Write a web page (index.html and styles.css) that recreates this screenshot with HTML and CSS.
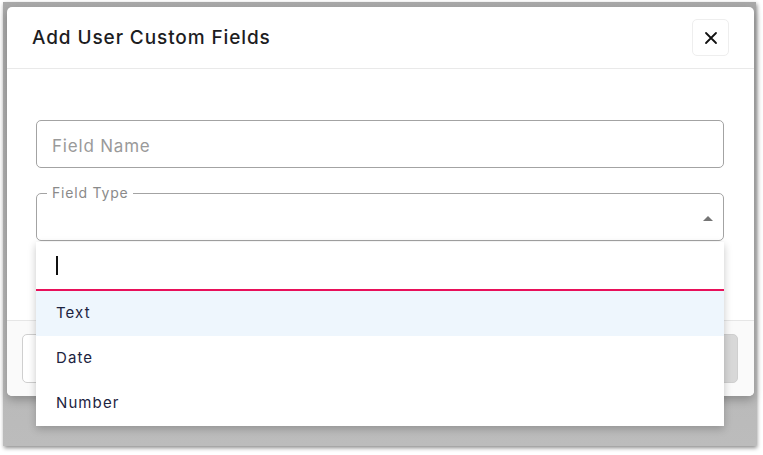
FILE: index.html
```html
<!DOCTYPE html>
<html>
<head>
<meta charset="utf-8">
<link rel="stylesheet" href="styles.css">
</head>
<body>
<div class="frame">
  <div class="modal">
    <div class="modal-header">
      <h2 class="title">Add User Custom Fields</h2>
      <button class="close" aria-label="Close">
        <svg width="14" height="14" viewBox="0 0 14 14"><path d="M2 2L12 12M12 2L2 12" stroke="#111" stroke-width="1.8" stroke-linecap="round"/></svg>
      </button>
    </div>
    <div class="modal-body">
      <div class="input">Field Name</div>
      <div class="select">
        <span class="legend">Field Type</span>
        <span class="arrow"></span>
      </div>
    </div>
    <div class="modal-footer">
      <button class="btn btn-cancel" aria-label="Cancel"></button>
      <button class="btn btn-save" aria-label="Save"></button>
    </div>
    <div class="dropdown">
      <div class="search"><span class="caret"></span></div>
      <div class="option active">Text</div>
      <div class="option">Date</div>
      <div class="option">Number</div>
    </div>
  </div>
</div>
</body>
</html>
```

FILE: styles.css
```css
* { box-sizing: border-box; }
html, body { margin: 0; padding: 0; background: #fff; }
body { font-family: Inter, "Noto Sans", sans-serif; width: 763px; height: 455px; overflow: hidden; }

.frame {
  margin: 2px 0 0 3px;
  width: 753px;
  height: 444px;
  padding: 5px 3px 0 4px;
  background: linear-gradient(#a9a9a9, #bcbcbc);
  box-shadow: 1px 2px 4px rgba(0,0,0,0.45);
}

.modal {
  position: relative;
  background: #fff;
  border-radius: 5px;
  width: 747px;
  box-shadow: 0 4px 10px rgba(0,0,0,0.25);
}

.modal-header {
  display: flex;
  align-items: center;
  justify-content: space-between;
  height: 62px;
  padding: 0 25px 0 25px;
  border-bottom: 1px solid #e9e9e9;
}
.title {
  margin: 0;
  font-size: 19px;
  font-weight: 500;
  color: #1d1d1f;
  letter-spacing: 0.9px;
}
.close {
  width: 37px; height: 37px;
  display: flex; align-items: center; justify-content: center;
  background: #fff;
  border: 1px solid #eeeeee;
  border-radius: 5px;
  padding: 0;
}

.modal-body {
  padding: 51px 30px 79px 29px;
  display: flex;
  flex-direction: column;
  gap: 25px;
}
.input {
  height: 48px;
  border: 1px solid #a3a3a3;
  border-radius: 5px;
  padding: 3px 15px 0 15px;
  display: flex; align-items: center;
  font-size: 17px;
  letter-spacing: 0.8px;
  color: #9a9a9a;
}
.select {
  position: relative;
  height: 48px;
  border: 1px solid #a3a3a3;
  border-radius: 5px;
}
.legend {
  position: absolute;
  left: 10px; top: -10px;
  background: #fff;
  padding: 0 5px;
  font-size: 14px;
  line-height: 17px;
  letter-spacing: 0.8px;
  color: #8a8a8a;
}
.arrow {
  position: absolute;
  right: 10px; top: 22px;
  width: 0; height: 0;
  border-left: 5px solid transparent;
  border-right: 5px solid transparent;
  border-bottom: 5px solid #757575;
}

.modal-footer {
  display: flex;
  justify-content: space-between;
  align-items: center;
  height: 76px;
  padding: 0 16px 0 15px;
  background: #fafafa;
  border-top: 1px solid #e6e6e6;
  border-radius: 0 0 5px 5px;
}
.btn {
  height: 49px;
  border-radius: 5px;
}
.btn-cancel { width: 110px; background: #fff; border: 1px solid #cfcfcf; }
.btn-save { width: 100px; background: #d8d8d8; border: 1px solid #cfcfcf; }

.dropdown {
  position: absolute;
  left: 29px; top: 235px;
  width: 688px;
  background: #fff;
  box-shadow: 0 3px 8px rgba(0,0,0,0.22);
}
.search {
  height: 49px;
  border-bottom: 2px solid #e8105a;
  padding: 14px 20px;
}
.caret { display: block; width: 1.5px; height: 19px; background: #111; }
.option {
  height: 45px;
  padding: 0 20px 3px;
  display: flex; align-items: center;
  font-size: 15px;
  letter-spacing: 1.1px;
  color: #1c2340;
}
.option.active { background: #eef6fd; }
```
